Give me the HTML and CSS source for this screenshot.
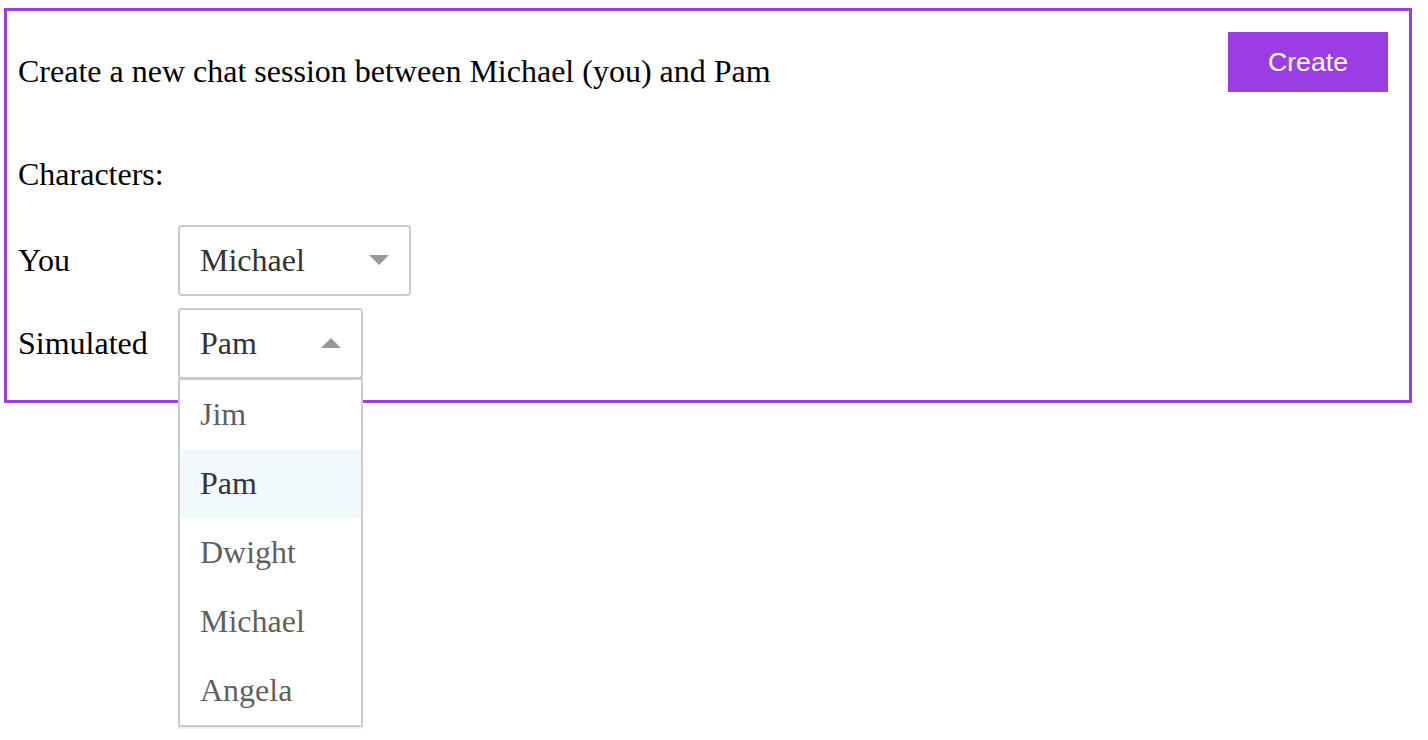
FILE: index.html
```html
<!DOCTYPE html>
<html>
<head>
<meta charset="utf-8">
<title>New chat session</title>
<link rel="stylesheet" href="styles.css">
</head>
<body>
<div class="panel">
  <div class="header">
    <p class="title">Create a new chat session between Michael (you) and Pam</p>
    <button class="create-btn">Create</button>
  </div>
  <p class="section-label">Characters:</p>
  <div class="row">
    <span class="row-label">You</span>
    <div class="dropdown">
      <div class="dropdown-control">
        <span class="dropdown-value">Michael</span>
        <span class="arrow arrow-down"></span>
      </div>
    </div>
  </div>
  <div class="row">
    <span class="row-label">Simulated</span>
    <div class="dropdown">
      <div class="dropdown-control">
        <span class="dropdown-value">Pam</span>
        <span class="arrow arrow-up"></span>
      </div>
      <div class="dropdown-menu">
        <div class="option">Jim</div>
        <div class="option selected">Pam</div>
        <div class="option">Dwight</div>
        <div class="option">Michael</div>
        <div class="option">Angela</div>
      </div>
    </div>
  </div>
</div>
</body>
</html>
```
FILE: styles.css
```css
html, body {
  margin: 0;
  padding: 0;
  background: #ffffff;
}
body {
  font-family: "Liberation Serif", "Times New Roman", serif;
  font-size: 32px;
  color: #000;
  min-height: 740px;
}
.panel {
  margin: 8px 16px 0 4px;
  border: 3px solid #9b3de2;
  padding: 21px 21px 21px 11px;
  height: 395px;
  box-sizing: border-box;
}
.header {
  display: flex;
  justify-content: space-between;
  align-items: flex-start;
}
.title {
  margin: 21px 0 0 0;
  line-height: normal;
}
.create-btn {
  font-family: "Liberation Sans", Arial, sans-serif;
  font-size: 26.67px;
  color: #fff;
  background: #9b3de2;
  border: none;
  height: 60px;
  padding: 0 40px;
  cursor: pointer;
}
.section-label {
  margin: 64px 0 32px 0;
  line-height: normal;
}
.row {
  display: flex;
  align-items: center;
  margin-bottom: 12px;
}
.row-label {
  width: 160px;
  flex: none;
}
.dropdown {
  position: relative;
  display: inline-block;
}
.dropdown-control {
  position: relative;
  background: #fff;
  border: 2px solid #ccc;
  border-radius: 4px;
  padding: 16px 104px 16px 20px;
  color: #333;
  line-height: 35px;
  cursor: default;
}
.arrow {
  position: absolute;
  right: 20px;
  top: 28px;
  width: 0;
  height: 0;
  border-style: solid;
}
.arrow-down {
  border-color: #999 transparent transparent;
  border-width: 10px 10px 0;
}
.arrow-up {
  border-color: transparent transparent #999;
  border-width: 0 10px 10px;
}
.dropdown-menu {
  position: absolute;
  top: 100%;
  left: 0;
  width: 100%;
  margin-top: -1px;
  box-sizing: border-box;
  background: #fff;
  border: 2px solid #ccc;
  box-shadow: 0 2px 0 rgba(0, 0, 0, 0.06);
  z-index: 1000;
}
.option {
  padding: 16px 20px;
  color: rgba(51, 51, 51, 0.8);
  line-height: 37px;
}
.option.selected {
  background: #f2f9fc;
  color: #333;
}
```
